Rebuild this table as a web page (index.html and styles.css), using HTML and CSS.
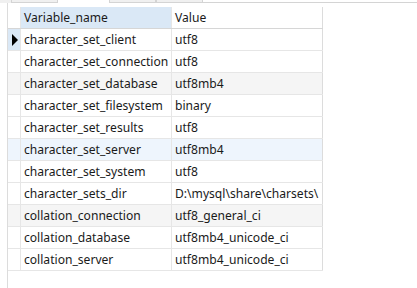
FILE: index.html
```html
<!DOCTYPE html>
<html lang="en">
<head>
  <meta charset="UTF-8">
  <title>Variables</title>
  <link rel="stylesheet" href="styles.css">
</head>
<body>
  <div class="tabs">
    <div class="tab"></div>
    <div class="tab active"></div>
    <div class="tab"></div>
    <div class="tab"></div>
    <div class="tab-rest"></div>
  </div>
  <div class="panel">
    <table class="grid">
      <thead>
        <tr>
          <th class="ind"></th>
          <th class="name sorted">Variable_name</th>
          <th class="value">Value</th>
        </tr>
      </thead>
      <tbody>
        <tr class="current"><td class="ind"><span class="arrow"></span></td><td>character_set_client</td><td>utf8</td></tr>
        <tr><td class="ind"></td><td>character_set_connection</td><td>utf8</td></tr>
        <tr class="alt"><td class="ind"></td><td>character_set_database</td><td>utf8mb4</td></tr>
        <tr><td class="ind"></td><td>character_set_filesystem</td><td>binary</td></tr>
        <tr><td class="ind"></td><td>character_set_results</td><td>utf8</td></tr>
        <tr class="hover"><td class="ind"></td><td>character_set_server</td><td>utf8mb4</td></tr>
        <tr><td class="ind"></td><td>character_set_system</td><td>utf8</td></tr>
        <tr><td class="ind"></td><td>character_sets_dir</td><td>D:\mysql\share\charsets\</td></tr>
        <tr class="alt"><td class="ind"></td><td>collation_connection</td><td>utf8_general_ci</td></tr>
        <tr><td class="ind"></td><td>collation_database</td><td>utf8mb4_unicode_ci</td></tr>
        <tr><td class="ind"></td><td>collation_server</td><td>utf8mb4_unicode_ci</td></tr>
      </tbody>
    </table>
  </div>
</body>
</html>
```

FILE: styles.css
```css
body {
  margin: 0;
  background: #fff;
  font-family: "Noto Sans", "Noto Sans CJK SC", sans-serif;
  font-size: 12.1px;
  color: #1a1a1a;
  height: 288px;
  overflow: hidden;
}
.tabs {
  display: flex;
  height: 3px;
  background: #f0f0f0;
  padding-left: 11px;
}
.tab {
  width: 45px;
  border: 1px solid #d4d4d4;
  border-top: none;
  background: #f0f0f0;
}
.tab.active {
  width: 51px;
  border: none;
  background: #fff;
}
.tab-rest {
  flex: 1;
  border-bottom: 1px solid #d4d4d4;
  background: #fff;
}
.panel {
  height: 285px;
  margin-left: 7px;
  border-left: 1px solid #dcdcdc;
  background: #fff;
  padding-top: 4px;
}
.grid {
  border-collapse: collapse;
  table-layout: fixed;
  width: 315px;
}
.grid th,
.grid td {
  height: 21px;
  padding: 0 2px 0 3px;
  border: 1px solid #e6e6e6;
  text-align: left;
  font-weight: normal;
  white-space: nowrap;
  overflow: hidden;
  line-height: 21px;
}
.grid th {
  border-bottom-color: #d6d6d6;
  border-top: none;
}
.grid th.sorted {
  background: #dae8f6;
}
.grid th:last-child,
.grid td:last-child {
  border-right-color: #dcdcdc;
}
.grid .ind {
  width: 6px;
  padding: 0 3px;
  border-left: none;
}
.grid .name {
  width: 145px;
}
.grid .value {
  width: 145px;
}
.grid tr.alt td {
  background: #f5f5f5;
}
.grid tr.hover td {
  background: #eef5fd;
}
.grid tr.current td.ind {
  background: #dae8f6;
}
.arrow {
  display: block;
  width: 0;
  height: 0;
  border-top: 6px solid transparent;
  border-bottom: 6px solid transparent;
  border-left: 6px solid #000;
  margin-left: 1px;
}
```
